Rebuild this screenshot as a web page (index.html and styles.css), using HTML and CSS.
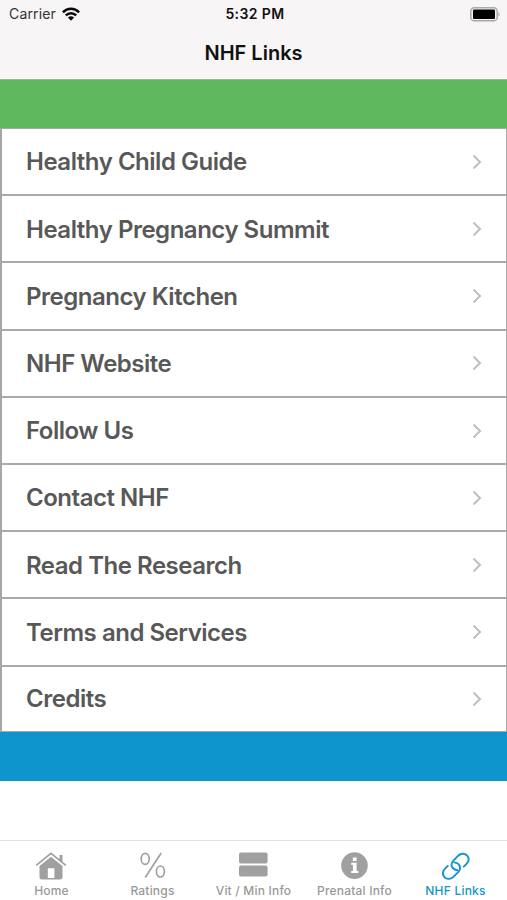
FILE: index.html
```html
<!DOCTYPE html>
<html lang="en">
<head>
<meta charset="utf-8">
<title>NHF Links</title>
<link rel="stylesheet" href="styles.css">
</head>
<body>
<header class="header">
  <div class="status">
    <div class="carrier"><span>Carrier</span>
      <svg width="18" height="14" viewBox="0 0 18 14" fill="none" stroke="#0b0b0b" stroke-width="2.5"><path d="M.9 5.3C5.5.7 12.5.7 17.1 5.3M3.8 8.3C6.8 5.4 11.2 5.4 14.2 8.3"/><path d="M5.9 10.6Q9 8 12.1 10.6L9 13.8Z" fill="#0b0b0b" stroke="none"/></svg>
    </div>
    <span class="time">5:32 PM</span>
    <svg class="battery" width="31" height="15" viewBox="0 0 31 15"><rect x=".8" y=".8" width="26.4" height="13" rx="3.6" fill="#f7f5f6" stroke="#aaa" stroke-width="1.500"/><rect x="3" y="2.600" width="22" height="9.400" rx="1"/><path d="M28.5 5Q31 7.3 28.5 9.6Z" fill="#aaa"/></svg>
  </div>
  <h1 class="title">NHF Links</h1>
</header>
<main class="content">
  <div class="band band-green"></div>
  <ul class="list">
    <li class="row"><span>Healthy Child Guide</span><svg class="chevron" viewBox="0 0 10 16"><path d="M1.5 1.5 8 8l-6.500 6.500"/></svg></li>
    <li class="row"><span>Healthy Pregnancy Summit</span><svg class="chevron" viewBox="0 0 10 16"><path d="M1.5 1.5 8 8l-6.500 6.500"/></svg></li>
    <li class="row"><span>Pregnancy Kitchen</span><svg class="chevron" viewBox="0 0 10 16"><path d="M1.5 1.5 8 8l-6.500 6.500"/></svg></li>
    <li class="row"><span>NHF Website</span><svg class="chevron" viewBox="0 0 10 16"><path d="M1.5 1.5 8 8l-6.500 6.500"/></svg></li>
    <li class="row"><span>Follow Us</span><svg class="chevron" viewBox="0 0 10 16"><path d="M1.5 1.5 8 8l-6.500 6.500"/></svg></li>
    <li class="row"><span>Contact NHF</span><svg class="chevron" viewBox="0 0 10 16"><path d="M1.5 1.5 8 8l-6.500 6.500"/></svg></li>
    <li class="row"><span>Read The Research</span><svg class="chevron" viewBox="0 0 10 16"><path d="M1.5 1.5 8 8l-6.500 6.500"/></svg></li>
    <li class="row"><span>Terms and Services</span><svg class="chevron" viewBox="0 0 10 16"><path d="M1.5 1.5 8 8l-6.500 6.500"/></svg></li>
    <li class="row"><span>Credits</span><svg class="chevron" viewBox="0 0 10 16"><path d="M1.5 1.5 8 8l-6.500 6.500"/></svg></li>
  </ul>
  <div class="band band-blue"></div>
</main>
<nav class="tabs">
  <div class="tab">
    <svg width="32" height="30" viewBox="0 0 32 30"><path d="M1.200 14.400 16 2.400l14.800 12" fill="none" stroke="#a0a0a0" stroke-width="1.800"/><path d="M24.500 4h3v7.500l-3-2.500Z" fill="#a0a0a0"/><path fill-rule="evenodd" d="M16 5.800 27.500 15V26q0 2.500-2.500 2.500H7Q4.500 28.500 4.500 26V15ZM12.800 17.200v9.800h6.600V17.200Z" fill="#a0a0a0"/></svg>
    <span>Home</span>
  </div>
  <div class="tab">
    <svg width="32" height="30" viewBox="0 0 32 30" fill="none" stroke="#a0a0a0" stroke-width="1.700"><ellipse cx="9.200" cy="7.900" rx="4" ry="5.500"/><ellipse cx="24.400" cy="20.500" rx="4" ry="5.500"/><path d="M25.200 2 9.200 26.500"/></svg>
    <span>Ratings</span>
  </div>
  <div class="tab">
    <svg width="32" height="30" viewBox="0 0 32 30" fill="#a0a0a0"><rect x="2" y="1.500" width="28.600" height="11" rx="2"/><rect x="2" y="14.500" width="28.600" height="11" rx="2"/></svg>
    <span>Vit / Min Info</span>
  </div>
  <div class="tab">
    <svg width="32" height="30" viewBox="0 0 32 30"><circle cx="16.500" cy="14.600" r="13.300" fill="#a0a0a0"/><path d="M14.800 6.500h3.800v3.600h-3.800ZM13.200 11.800h5.400v8.200h1.800v2h-7.200v-2h1.700v-6.200h-1.700Z" fill="#fff"/></svg>
    <span>Prenatal Info</span>
  </div>
  <div class="tab active">
    <svg width="32" height="30" viewBox="0 0 32 30" fill="none" stroke="#1495cd" stroke-width="1.900" stroke-linecap="round"><path d="M18.400 19.200C12.800 18.800 10.800 13.500 14.200 9.800L19.200 4.700C22.500 1.500 27 2.500 28.700 5.200S29.400 11.100 27.300 13.200L24.800 15.700"/><path d="M15.200 11.400C20.800 11.800 22.800 17.100 19.400 20.800L14.400 25.900C11.100 29.100 6.600 28.100 4.900 25.400S4.200 19.500 6.300 17.400L8.800 14.900"/></svg>
    <span>NHF Links</span>
  </div>
</nav>
</body>
</html>
```
FILE: styles.css
```css
* { box-sizing: border-box; }
body {
  margin: 0;
  width: 507px;
  height: 900px;
  display: flex;
  flex-direction: column;
  overflow: hidden;
  background: #fff;
  font-family: Inter, "Liberation Sans", sans-serif;
}
svg { display: block; flex: none; }
.header { height: 79px; background: #f7f5f6; }
.status {
  height: 27px;
  padding: 0 6px 0 9px;
  display: grid;
  grid-template-columns: 1fr auto 1fr;
  align-items: center;
  font-size: 14px;
  line-height: 28px;
  color: #111;
}
.carrier { display: flex; align-items: center; gap: 6px; color: #333; letter-spacing: .15px; }
.time { font-weight: 600; font-size: 14px; letter-spacing: .4px; }
.battery { justify-self: end; }
.title {
  margin: 0;
  font-size: 20px;
  line-height: 52px;
  font-weight: 600;
  text-align: center;
  color: #111;
}
.content { flex: 1; }
.band { height: 49px; }
.band-green { background: #5eb85e; border-top: 1px solid #99b899; }
.band-blue { background: #0e94cd; }
.list {
  margin: 0;
  padding: 0;
  list-style: none;
  border: solid #a7a7a7;
  border-width: 1px 1px 1px 2px;
}
.row {
  height: 67.2px;
  padding: .6px 24px 0;
  display: flex;
  align-items: center;
  justify-content: space-between;
  border-bottom: 2px solid #aaa;
  font-size: 24px;
  font-weight: 600;
  letter-spacing: -.48px;
  color: #585858;
}
.row:last-child { height: 64.4px; border-bottom: 0; }
.chevron { width: 10px; height: 16px; fill: none; stroke: #bfbfbf; stroke-width: 2; }
.tabs {
  height: 60px;
  display: grid;
  grid-template-columns: repeat(5, 101px);
  justify-content: center;
  border-top: 1px solid #e2e2e2;
}
.tab {
  padding-top: 10px;
  display: flex;
  flex-direction: column;
  align-items: center;
  gap: 2px;
  font-size: 12px;
  line-height: 16px;
  font-weight: 500;
  letter-spacing: .2px;
  color: #999;
  white-space: nowrap;
}
.tab svg { margin-left: -1px; }
.active { color: #1495cd; }
```
